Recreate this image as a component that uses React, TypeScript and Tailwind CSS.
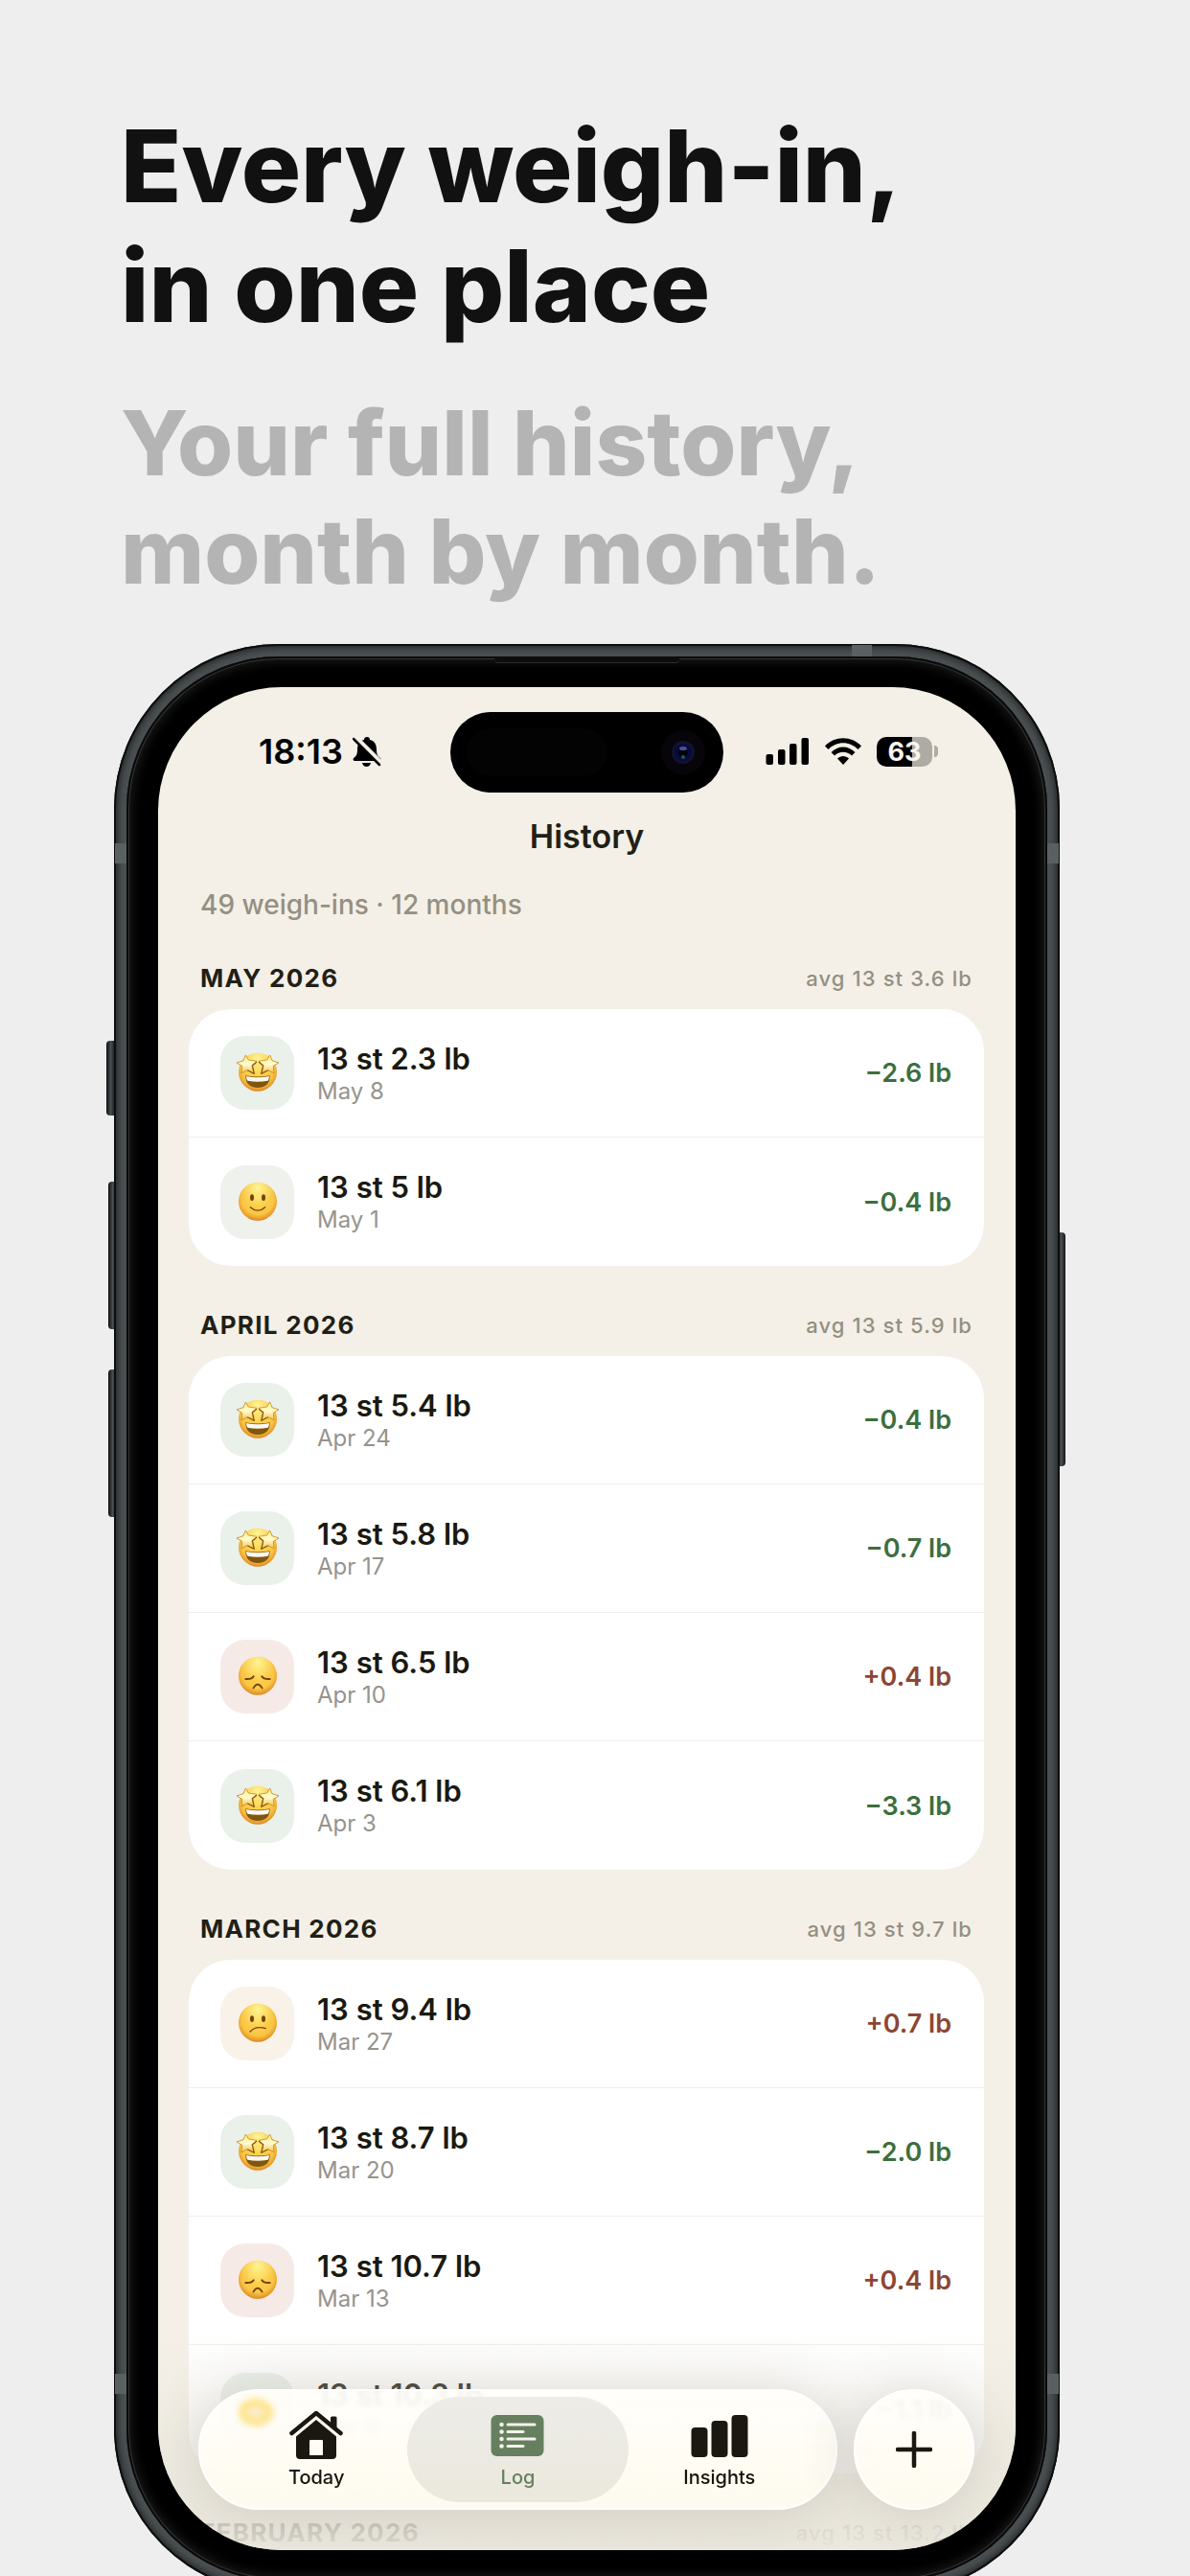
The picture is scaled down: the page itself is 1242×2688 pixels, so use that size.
import { clsx } from "clsx";
import type { ReactNode } from "react";

type Mood = "starstruck" | "smile" | "sad" | "unsure";

interface WeighIn {
  date: string;
  weight: string;
  change: string;
  mood: Mood;
}

interface Month {
  name: string;
  average: string;
  entries: WeighIn[];
}

const months: Month[] = [
  {
    name: "MAY 2026",
    average: "avg 13 st 3.6 lb",
    entries: [
      { date: "May 8", weight: "13 st 2.3 lb", change: "−2.6 lb", mood: "starstruck" },
      { date: "May 1", weight: "13 st 5 lb", change: "−0.4 lb", mood: "smile" },
    ],
  },
  {
    name: "APRIL 2026",
    average: "avg 13 st 5.9 lb",
    entries: [
      { date: "Apr 24", weight: "13 st 5.4 lb", change: "−0.4 lb", mood: "starstruck" },
      { date: "Apr 17", weight: "13 st 5.8 lb", change: "−0.7 lb", mood: "starstruck" },
      { date: "Apr 10", weight: "13 st 6.5 lb", change: "+0.4 lb", mood: "sad" },
      { date: "Apr 3", weight: "13 st 6.1 lb", change: "−3.3 lb", mood: "starstruck" },
    ],
  },
  {
    name: "MARCH 2026",
    average: "avg 13 st 9.7 lb",
    entries: [
      { date: "Mar 27", weight: "13 st 9.4 lb", change: "+0.7 lb", mood: "unsure" },
      { date: "Mar 20", weight: "13 st 8.7 lb", change: "−2.0 lb", mood: "starstruck" },
      { date: "Mar 13", weight: "13 st 10.7 lb", change: "+0.4 lb", mood: "sad" },
      { date: "Mar 6", weight: "13 st 10.3 lb", change: "−1.1 lb", mood: "starstruck" },
    ],
  },
  {
    name: "FEBRUARY 2026",
    average: "avg 13 st 13.2 lb",
    entries: [],
  },
];

const tileColors: Record<Mood, string> = {
  starstruck: "bg-[#eaf1ea]",
  smile: "bg-[#eff1ec]",
  sad: "bg-[#f6eae7]",
  unsure: "bg-[#f8f2e8]",
};

const star =
  "M31 9 40 24 66 28 51 41 57 68 36 56 18 66 20 43 3 33 24 26Z";

function Face({ mood }: { mood: Mood }) {
  return (
    <svg viewBox="0 0 138 128" className="w-[46px]" aria-hidden="true">
      <circle cx="69" cy="62" r="60" fill="url(#face-edge)" />
      <circle cx="69" cy="62" r="60" fill="url(#face-shine)" />
      {mood === "starstruck" && (
        <>
          <path
            d="M31 73q38 7 76 0q1 37-38 38q-39-1-38-38Z"
            fill="#80560f"
          />
          <path d="M33 75q36 7 72 0q0 9-4 14q-32 6-64 0q-4-5-4-14Z" fill="#fbf8f2" />
          <g
            fill="url(#star-fill)"
            stroke="#c98a24"
            strokeWidth="2.500"
            strokeLinejoin="round"
          >
            <path d={star} />
            <path d={star} transform="matrix(-1 0 0 1 138 0)" />
          </g>
          <path
            d="M65 31q-6 6-13 10l6 26l-20-10M73 31q6 6 13 10l-6 26l20-10"
            fill="none"
            stroke="#87560f"
            strokeWidth="3.500"
            strokeLinecap="round"
            strokeLinejoin="round"
          />
        </>
      )}
      {(mood === "smile" || mood === "unsure") && (
        <g fill="#74430f">
          <ellipse cx="51" cy="50" rx="6" ry="10" />
          <ellipse cx="87" cy="50" rx="6" ry="10" />
        </g>
      )}
      <g fill="none" stroke="#74430f" strokeWidth="4" strokeLinecap="round">
        {mood === "smile" && <path d="M46 80q23 21 46 0" />}
        {mood === "unsure" && <path d="M45 90q18-20 49-10" />}
        {mood === "sad" && (
          <>
            <path d="M55 101q14-24 28 0" strokeWidth="5" />
            <path
              d="M31 72q19 2 25-8M107 72q-19 2-25-8"
              strokeWidth="6"
            />
          </>
        )}
      </g>
    </svg>
  );
}

/* Gradients shared by every face */
function FaceDefs() {
  return (
    <svg className="absolute size-0" aria-hidden="true">
      <defs>
        <radialGradient id="face-edge" cx="50%" cy="42%" r="60%">
          <stop offset="0" stopColor="#fdd852" />
          <stop offset="0.7" stopColor="#f9c544" />
          <stop offset="0.9" stopColor="#e79b2b" />
          <stop offset="1" stopColor="#cf7719" />
        </radialGradient>
        <radialGradient id="face-shine" cx="50%" cy="14%" r="46%">
          <stop offset="0" stopColor="#fff69a" stopOpacity="0.95" />
          <stop offset="1" stopColor="#fff08a" stopOpacity="0" />
        </radialGradient>
        <linearGradient id="star-fill" x1="0" y1="0" x2="0" y2="1">
          <stop offset="0" stopColor="#fff27e" />
          <stop offset="0.5" stopColor="#fffad2" />
          <stop offset="1" stopColor="#f3bd3c" />
        </linearGradient>
      </defs>
    </svg>
  );
}

function BellOffIcon() {
  return (
    <svg viewBox="0 0 30 32" className="w-[30px]" aria-hidden="true">
      <path
        d="M15 1c2 0 3 1 3 3c5 1 7 5 7 10c0 5 1 7 4 9c1 1 0 3-1 3H2c-1 0-2-2-1-3c3-2 4-4 4-9c0-5 2-9 7-10c0-2 1-3 3-3Z"
        fill="#000"
      />
      <path d="M10 28h9q-1 4-4.500 4T10 28Z" fill="#000" />
      <path d="M2 1 30 29" stroke="#f4f0e7" strokeWidth="6" />
      <path d="M1 3 28 30" stroke="#000" strokeWidth="2.500" strokeLinecap="round" />
    </svg>
  );
}

function SignalIcon() {
  return (
    <svg viewBox="0 0 46 30" className="w-[46px]" aria-hidden="true">
      <rect x="0.500" y="18" width="7.500" height="11" rx="2" />
      <rect x="13" y="13" width="7.500" height="16" rx="2" />
      <rect x="25" y="7" width="7.500" height="22" rx="2" />
      <rect x="37.500" y="1" width="7.500" height="28" rx="2" />
    </svg>
  );
}

function WifiIcon() {
  return (
    <svg viewBox="0 0 40 30" className="w-10" aria-hidden="true">
      <path d="M1 9.500C11-1.500 29-1.500 39 9.500l-3.500 3.500C27 4 13 4 4.500 13Z" strokeLinejoin="round" />
      <path d="M7.500 16c7-7.500 18-7.500 25 0L29 19.500c-5-5-13-5-18 0Z" />
      <path d="M14 22.500c3.500-3.500 8.500-3.500 12 0L20 29Z" />
    </svg>
  );
}

function Battery() {
  return (
    <div className="flex items-center gap-0.5">
      <div className="flex h-[31px] w-[58px] items-center justify-center rounded-[10px] bg-linear-to-r from-black from-63% to-[#aeaba6] to-63% text-[27px] leading-none font-bold text-[#f8f5ee]">
        63
      </div>
      <div className="h-3 w-1 rounded-r-full bg-[#aeaba6]" />
    </div>
  );
}

function StatusBar() {
  return (
    <div className="grid grid-cols-[1fr_285px_1fr] items-center text-black">
      <div className="flex items-center gap-2.5 pb-0.5 pl-[105px]">
        <span className="text-[36px] leading-10 font-semibold">18:13</span>
        <BellOffIcon />
      </div>
      <div className="flex h-[84px] items-center justify-between rounded-full bg-black pr-[19px] pl-[17px]">
        <div className="h-[50px] w-[147px] rounded-full bg-[#030303]" />
        <div className="flex size-[46px] items-center justify-center rounded-full bg-[#07050a]">
          <svg viewBox="0 0 24 24" className="size-6" aria-hidden="true">
            <circle cx="12" cy="12" r="12" fill="#11122e" />
            <circle cx="12" cy="12" r="9" fill="#090a3c" />
            <circle cx="12" cy="12" r="5" fill="#04040d" />
            <ellipse cx="12" cy="8" rx="4" ry="2" fill="#4a4f9a" />
            <circle cx="12" cy="17" r="2" fill="#1c5a57" />
          </svg>
        </div>
      </div>
      <div className="flex items-center gap-[15px] pb-0.5 pl-11">
        <SignalIcon />
        <WifiIcon />
        <Battery />
      </div>
    </div>
  );
}

function EntryRow({ entry }: { entry: WeighIn }) {
  return (
    <li className="flex h-[134px] items-center gap-6 border-b border-[#efefed] pr-[34px] pl-[33px] last:border-b-0">
      <div
        className={clsx(
          "flex size-[77px] items-center justify-center rounded-[26px]",
          tileColors[entry.mood],
        )}
      >
        <Face mood={entry.mood} />
      </div>
      <div className="flex grow flex-col pt-0.5">
        <span className="text-[31px] leading-9 font-semibold text-[#1a1911]">
          {entry.weight}
        </span>
        <span className="text-[24px] leading-8 text-[#96938c]">
          {entry.date}
        </span>
      </div>
      <span
        className={clsx(
          "pt-0.5 text-[27px] font-semibold",
          entry.change.startsWith("+") ? "text-[#8c4632]" : "text-[#3d6e3d]",
        )}
      >
        {entry.change}
      </span>
    </li>
  );
}

function MonthSection({ month }: { month: Month }) {
  return (
    <section className="flex flex-col gap-4">
      <div className="flex items-center justify-between px-3">
        <h3 className="text-[26px] leading-8 font-bold tracking-wider text-[#211f17]">
          {month.name}
        </h3>
        <span className="text-[22px] leading-8 font-medium tracking-wider text-[#948f83]">
          {month.average}
        </span>
      </div>
      <ul className="overflow-hidden rounded-[44px] bg-white">
        {month.entries.map((entry) => (
          <EntryRow key={entry.date} entry={entry} />
        ))}
      </ul>
    </section>
  );
}

function HomeIcon() {
  return (
    <svg viewBox="0 0 56 52" className="h-[52px]" aria-hidden="true">
      <path
        d="M2.500 24 28 3l25.500 21"
        fill="none"
        stroke="#1a1810"
        strokeWidth="4.500"
        strokeLinecap="round"
        strokeLinejoin="round"
      />
      <path d="M43 14V8q0-1.500 1.500-1.500H48q1.500 0 1.500 1.500v12Z" fill="#1a1810" />
      <path
        fillRule="evenodd"
        d="M28 10 49 27.500v19.500q0 4-4 4H11q-4 0-4-4V27.500ZM22 31q-1 0-1 1v15h14V32q0-1-1-1Z"
        fill="#1a1810"
      />
    </svg>
  );
}

function LogIcon() {
  return (
    <svg viewBox="0 0 56 52" className="h-[52px]" aria-hidden="true">
      <rect x="0.500" y="5" width="55" height="43" rx="6" fill="#66805f" />
      {[15, 22.5, 30, 37.5].map((y, i) => (
        <g key={y} stroke="#f5f2ec" strokeLinecap="round">
          <path d={`M11.500 ${y}h.01`} strokeWidth="4.500" />
          <path d={`M18 ${y}H${i % 2 ? 34 : 46}`} strokeWidth="3" />
        </g>
      ))}
    </svg>
  );
}

function InsightsIcon() {
  return (
    <svg viewBox="0 0 60 52" className="h-[52px]" fill="#1a1810" aria-hidden="true">
      <rect x="0.500" y="18" width="17" height="31" rx="4" />
      <rect x="21.500" y="11" width="17" height="38" rx="4" />
      <rect x="42.500" y="5" width="17" height="44" rx="4" />
    </svg>
  );
}

function Tab({
  label,
  active,
  children,
}: {
  label: string;
  active?: boolean;
  children: ReactNode;
}) {
  return (
    <button
      type="button"
      className={clsx(
        "relative flex flex-col items-center justify-center gap-1 rounded-full pt-0.5 text-[20px] leading-7 font-medium",
        active
          ? "-mx-[10px] bg-linear-to-b from-[#edece8] to-[#ebe8dd] text-[#66805f]"
          : "text-[#15130d]",
      )}
    >
      {children}
      {label}
    </button>
  );
}

const glass =
  "border-2 border-white bg-linear-to-b from-[#fffefa]/93 to-[#fffbef]/95 shadow-[0_4px_60px_rgba(70,60,50,0.18)] backdrop-blur-[2px]";

function TabBar() {
  return (
    <nav className="absolute right-[43px] bottom-[42px] left-[42px] flex gap-[17px]">
      <div
        className={clsx(
          "relative grid h-[126px] grow grid-cols-3 rounded-full px-4 py-[6px]",
          glass,
        )}
      >
        {/* emoji of the row below, refracted by the glass */}
        <div className="absolute top-2 left-10 h-7 w-9 rounded-[50%] border-8 border-[#fde58c] bg-[#fbeccb] blur-[3px]" />
        <Tab label="Today">
          <HomeIcon />
        </Tab>
        <Tab label="Log" active>
          <LogIcon />
        </Tab>
        <Tab label="Insights">
          <InsightsIcon />
        </Tab>
      </div>
      <button
        type="button"
        aria-label="Add weigh-in"
        className={clsx(
          "flex size-[126px] items-center justify-center rounded-full",
          glass,
        )}
      >
        <svg viewBox="0 0 38 38" className="size-[38px]" aria-hidden="true">
          <path
            d="M19 2v34M2 19h34"
            stroke="#1a1810"
            strokeWidth="4.500"
            strokeLinecap="round"
          />
        </svg>
      </button>
    </nav>
  );
}

const sideButton = "absolute w-[9px] bg-linear-to-r from-[#0e0f10] via-[#4a4f52] to-[#17191a]";
const band = "absolute bg-[#5a6062]";

function Phone() {
  return (
    <div className="relative min-h-0 grow">
      <div className={clsx(sideButton, "top-[414px] -left-[8px] h-[78px] rounded-l-sm")} />
      <div className={clsx(sideButton, "top-[561px] -left-[6px] h-[154px] rounded-l-sm")} />
      <div className={clsx(sideButton, "top-[757px] -left-[6px] h-[154px] rounded-l-sm")} />
      <div className={clsx(sideButton, "top-[614px] -right-[6px] h-[244px] rounded-r-sm")} />
      <div className="relative h-full rounded-[172px] bg-[#4b5052] p-[13px] shadow-[inset_0_0_0_2px_#0d0e0e,inset_0_0_8px_3px_#1b1d1e]">
        <div className={clsx(band, "top-[208px] left-px h-[21px] w-3")} />
        <div className={clsx(band, "top-[208px] right-px h-[21px] w-3")} />
        <div className={clsx(band, "bottom-[208px] left-px h-[21px] w-3")} />
        <div className={clsx(band, "right-px bottom-[208px] h-[21px] w-3")} />
        <div className={clsx(band, "top-px right-[196px] h-3 w-[21px]")} />
        <div className="relative h-full rounded-[159px] bg-black px-[33px] py-8 shadow-[inset_0_0_0_2px_#0a0a0a,inset_0_0_0_3px_#343536,inset_0_0_12px_5px_#1c1c1c]">
          <div className="absolute inset-x-[384px] top-0 h-[7px] rounded-b-sm border-b border-[#2b2b2b] bg-[#0d0d0d]" />
          <div className="relative h-full overflow-hidden rounded-[129px] bg-[#f4f0e7] pt-[26px]">
            <StatusBar />
            <h2 className="mt-[26px] text-center text-[34px] leading-10 font-semibold text-[#211f17]">
              History
            </h2>
            <div className="mt-[34px] pr-[33px] pl-8">
              <p className="px-3 text-[28px] leading-[34px] font-medium text-[#949083]">
                49 weigh-ins · 12 months
              </p>
              <div className="mt-11 flex flex-col gap-[46px]">
                {months.map((month) => (
                  <MonthSection key={month.name} month={month} />
                ))}
              </div>
            </div>
            <div className="absolute inset-x-0 bottom-0 h-[230px] bg-linear-to-b from-[#ebe8de]/0 via-[#ebe8de]/50 to-[#ebe8de]/95" />
            <TabBar />
          </div>
        </div>
      </div>
    </div>
  );
}

export default function App() {
  return (
    <main className="flex h-screen flex-col overflow-hidden bg-[#eeeeee] pt-[111px] font-['Inter',sans-serif]">
      <FaceDefs />
      <header className="flex flex-col gap-[45px] px-[126px] font-extrabold">
        <h1 className="text-[104px] leading-[125px] text-[#111111]">
          Every weigh-in,
          <br />
          in one place
        </h1>
        <p className="text-[94px] leading-[113px] text-[#b4b4b4]">
          Your full history,
          <br />
          month by month.
        </p>
      </header>
      <div className="mt-10 -mb-[18px] flex min-h-0 grow flex-col pr-[136px] pl-[119px]">
        <Phone />
      </div>
    </main>
  );
}
